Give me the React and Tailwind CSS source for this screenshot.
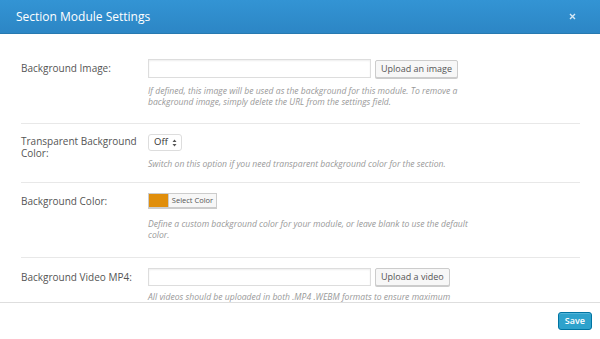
import React from 'react';

function Row({ label, children, desc, className, descGap = 'mt-[8px]' }) {
  return (
    <div className={`flex border-b border-[#e8e8e8] ${className}`}>
      <div className="w-[127px] shrink-0 pr-[6px] text-[10px] leading-[11.5px] text-[#555]">{label}</div>
      <div className="flex-1">
        {children}
        {desc && (
          <p className={`${descGap} w-[326px] text-[8.6px] italic leading-[11px] text-[#999]`}>{desc}</p>
        )}
      </div>
    </div>
  );
}

function UploadField({ button, height = 'h-[19px]' }) {
  return (
    <div className="flex items-center gap-[4px]">
      <div className={`${height} w-[223px] border border-[#ddd] bg-white shadow-[inset_0_1px_2px_rgba(0,0,0,0.07)]`} />
      <button className="h-[18px] rounded-[2px] border border-[#ccc] bg-[#f7f7f7] px-[5px] text-[9px] text-[#555] shadow-[0_1px_0_#ccc]">
        {button}
      </button>
    </div>
  );
}

export default function App() {
  return (
    <div className="flex h-[339px] w-[600px] flex-col bg-white" style={{ fontFamily: '"Open Sans", sans-serif' }}>
      <div className="flex h-[34px] shrink-0 items-center justify-between border-b border-[#2779b0] bg-gradient-to-b from-[#3394d4] to-[#2c86c5] pl-[16px] pr-[24px]">
        <h1 className="text-[12px] font-normal text-white">Section Module Settings</h1>
        <svg width="7" height="7" viewBox="0 0 7 7" className="text-[#d6e9f6]">
          <path d="M1 1L6 6M6 1L1 6" stroke="currentColor" strokeWidth="1.4" />
        </svg>
      </div>

      <div className="flex-1 overflow-hidden pl-[21px] pr-[20px] pt-[14px]">
        <Row
          className="pt-[11px] pb-[15px]"
          label={<div className="pt-[4px]">Background Image:</div>}
          desc="If defined, this image will be used as the background for this module. To remove a background image, simply delete the URL from the settings field."
        >
          <UploadField button="Upload an image" />
        </Row>

        <Row
          className="pt-[10px] pb-[12px]"
          label={<div className="pt-[2px]">Transparent Background Color:</div>}
          desc="Switch on this option if you need transparent background color for the section."
        >
          <div className="flex h-[17px] w-[34px] items-center justify-between rounded-[3px] border border-[#ddd] bg-white pl-[5px] pr-[4px] text-[9.5px] text-[#333]">
            <span>Off</span>
            <svg width="5" height="8" viewBox="0 0 5 8" className="text-[#555]">
              <path d="M2.5 0.5L4.5 3H0.5Z M2.5 7.5L4.5 5H0.5Z" fill="currentColor" />
            </svg>
          </div>
        </Row>

        <Row
          className="pt-[10px] pb-[16px]"
          label={<div className="pt-[3px]">Background Color:</div>}
          desc="Define a custom background color for your module, or leave blank to use the default color."
        >
          <div className="flex h-[15px] w-[69px] border border-[#ccc] bg-[#f7f7f7] shadow-[0_1px_0_#ccc]">
            <div className="w-[19px] bg-[#e08e0b]" />
            <div className="flex flex-1 items-center justify-center border-l border-[#ccc] text-[7.5px] text-[#555]">Select Color</div>
          </div>
          <div className="h-[3px]" />
        </Row>

        <Row
          className="pt-[10px] pb-[14px]"
          descGap="mt-[6px]"
          label={<div className="pt-[4px]">Background Video MP4:</div>}
          desc="All videos should be uploaded in both .MP4 .WEBM formats to ensure maximum compatibility in all browsers."
        >
          <UploadField button="Upload a video" height="h-[18px]" />
        </Row>
      </div>

      <div className="flex h-[37px] shrink-0 items-center justify-end border-t border-[#dedede] pr-[8px]">
        <button className="h-[18px] rounded-[3px] border border-[#0074a2] bg-[#2ea2cc] px-[6px] text-[9px] font-semibold text-white shadow-[inset_0_1px_0_rgba(120,200,230,0.5)]">
          Save
        </button>
      </div>
    </div>
  );
}
